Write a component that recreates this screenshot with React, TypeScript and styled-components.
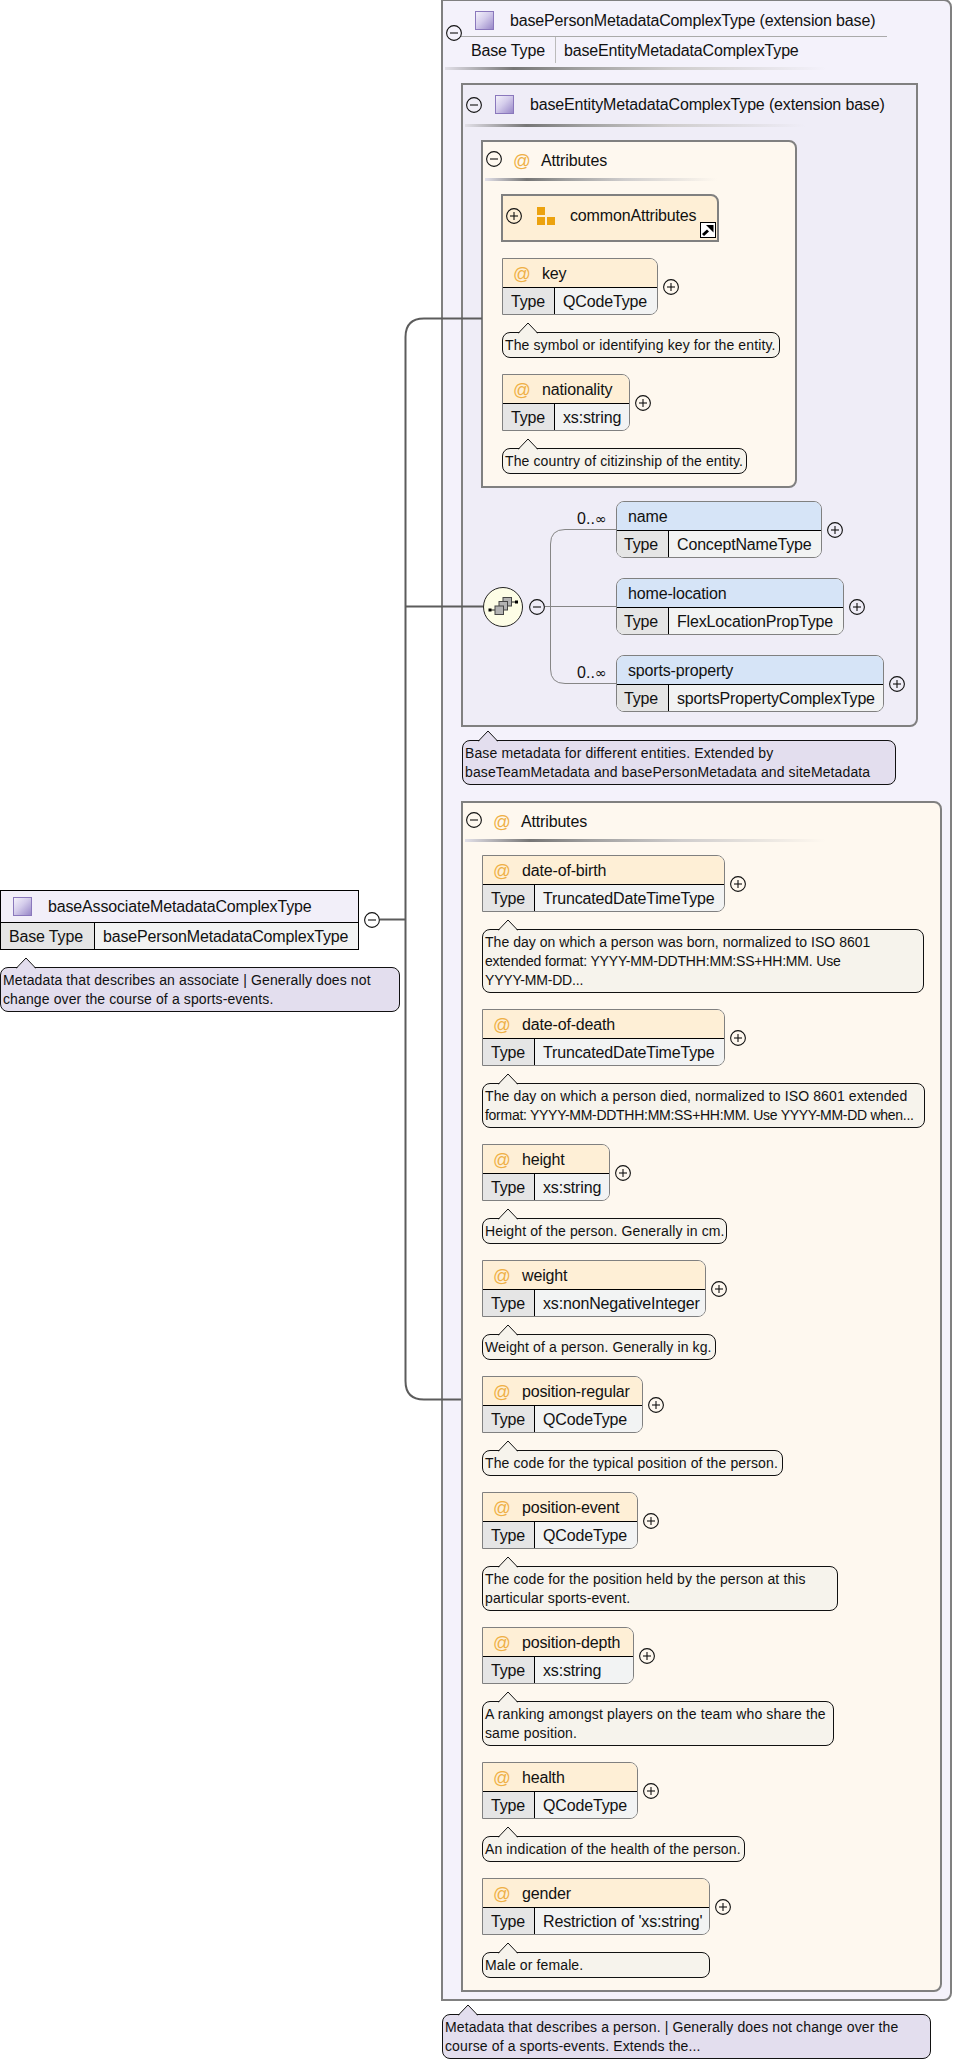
import React from "react";
import styled, { createGlobalStyle } from "styled-components";

const Global = createGlobalStyle`
  html, body { margin: 0; padding: 0; background: #fff; }
  body { font-family: "Liberation Sans", Arial, sans-serif; color: #111; }
`;

const Page = styled.div`
  position: relative;
  display: flex;
  width: 954px;
  height: 2061px;
  overflow: hidden;
  font-size: 16px;
  letter-spacing: -0.16px;
`;

const LeftColumn = styled.div`
  flex: none;
  width: 441px;
  padding-top: 890px;
  box-sizing: border-box;
`;

const RightColumn = styled.div`
  flex: none;
  display: flex;
  flex-direction: column;
  align-items: flex-start;
  margin-top: -1px;
`;

const RootRow = styled.div`
  display: flex;
  align-items: center;
  gap: 5px;
`;

const RootNode = styled.div`
  width: 359px;
  box-sizing: border-box;
  border: 1px solid #000;
  background: #f2eff9;
`;

const RootHeader = styled.div`
  display: flex;
  align-items: center;
  height: 31px;
  padding-left: 12px;
  gap: 16px;
  border-bottom: 1px solid #000;
`;

const TypeIcon = styled.div`
  flex: none;
  width: 19px;
  height: 19px;
  box-sizing: border-box;
  border: 1px solid #8a78bc;
  background: linear-gradient(135deg, #f4f2fb 0%, #d4cceb 45%, #9888c8 100%);
`;

const CellRow = styled.div`
  display: flex;
  height: 26px;
  background: #f2f3f3;
`;

const LabelCell = styled.div<{ $width: number; $pad?: number }>`
  flex: none;
  display: flex;
  align-items: center;
  width: ${(p) => p.$width}px;
  padding: 1px 0 0 ${(p) => p.$pad ?? 8}px;
  box-sizing: border-box;
  background: #e5e5e5;
  border-right: 1px solid #000;
`;

const ValueCell = styled.div`
  display: flex;
  align-items: center;
  padding: 1px 0 0 8px;
  box-sizing: border-box;
  white-space: nowrap;
`;

const Callout = styled.div<{ $width: number; $tone: "note" | "type" }>`
  position: relative;
  width: ${(p) => p.$width}px;
  box-sizing: border-box;
  border: 1px solid #111;
  border-radius: 8px;
  padding: 3px 0 2px 2px;
  font-size: 14px;
  line-height: 19px;
  white-space: nowrap;
  background: ${(p) => (p.$tone === "note" ? "#f6f3ec" : "#e3deee")};
`;

const NoteLine = styled.div<{ $tracking: number }>`
  letter-spacing: ${(p) => p.$tracking}px;
`;

const TipSvg = styled.svg`
  position: absolute;
  left: 15px;
  top: -11px;
`;

const OuterPanel = styled.div`
  position: relative;
  width: 511px;
  box-sizing: border-box;
  border: 2px solid #808080;
  border-radius: 0 8px 8px 0;
  background: #f4f2fb;
  padding-bottom: 7px;
`;

const Stack = styled.div`
  display: flex;
  flex-direction: column;
  align-items: flex-start;
`;

const OuterTitle = styled.div`
  display: flex;
  align-items: center;
  gap: 16px;
  width: 426px;
  height: 36px;
  margin-left: 18px;
  padding: 4px 0 0 14px;
  box-sizing: border-box;
  border-bottom: 1px solid #aaa;
  white-space: nowrap;
`;

const OuterToggle = styled.div`
  position: absolute;
  left: 3px;
  top: 24px;
  display: flex;
`;

const BaseRow = styled.div`
  display: flex;
  height: 26px;
  margin-left: 28px;
`;

const BaseLabel = styled.div`
  display: flex;
  align-items: center;
  width: 85px;
  padding-top: 1px;
  box-sizing: border-box;
  border-right: 1px solid #bbb;
`;

const Rule = styled.div<{ $width: number; $left: number }>`
  flex: none;
  width: ${(p) => p.$width}px;
  height: 3px;
  margin-left: ${(p) => p.$left}px;
  background: linear-gradient(90deg, #e2e0e8 0%, #767676 18%, #a0a0a0 35%, #cfcdcd 60%, rgba(220, 220, 220, 0) 100%);
`;

const BaseRule = styled(Rule)`
  margin-top: 4px;
`;

const EntityPanel = styled.div`
  width: 457px;
  margin: 13px 0 0 18px;
  box-sizing: border-box;
  border: 2px solid #808080;
  border-radius: 0 0 8px 0;
  background: #efedf7;
  padding-bottom: 13px;
`;

const EntityTitle = styled.div`
  display: flex;
  align-items: center;
  height: 39px;
  padding-left: 3px;
  white-space: nowrap;
`;

const EntityIcon = styled(TypeIcon)`
  margin: 0 16px 0 13px;
`;

const NoteAfterPanel = styled.div`
  margin: 13px 0 0 19px;
`;

const PersonNote = styled.div`
  margin: 13px 0 0 1px;
`;

const RootNoteGap = styled.div`
  margin-top: 17px;
`;

const AttrBox = styled.div<{ $width: number; $top: number; $left: number }>`
  width: ${(p) => p.$width}px;
  margin: ${(p) => p.$top}px 0 0 ${(p) => p.$left}px;
  box-sizing: border-box;
  border: 2px solid #808080;
  border-radius: 0 8px 8px 0;
  background: #fef8ef;
  padding-bottom: 12px;
`;

const AttrTitle = styled.div`
  display: flex;
  align-items: center;
  height: 36px;
  padding: 1px 0 0 3px;
  box-sizing: border-box;
  svg {
    margin-bottom: 3px;
  }
`;

const At = styled.span`
  display: inline-block;
  width: 16px;
  margin: 1px 1px 0 -1px;
  color: #efb045;
  letter-spacing: 0;
  font-size: 17.5px;
`;

const TitleAt = styled(At)`
  margin: 2px 12px 0 11px;
`;

const AttrList = styled.div`
  display: flex;
  flex-direction: column;
  align-items: flex-start;
  gap: 16px;
  margin-top: 13px;
  padding-left: 19px;
`;

const CommonGroup = styled.div`
  position: relative;
  display: flex;
  align-items: center;
  width: 218px;
  height: 48px;
  margin-left: -1px;
  padding: 0 0 5px 3px;
  box-sizing: border-box;
  border: 2px solid #808080;
  border-radius: 0 8px 0 0;
  background: #feefd6;
`;

const GroupIcon = styled.svg`
  margin: 0 14px 0 15px;
  flex: none;
`;

const LinkBadge = styled.svg`
  position: absolute;
  right: 1px;
  bottom: 2px;
`;

const AttrItem = styled.div`
  display: flex;
  flex-direction: column;
  align-items: flex-start;
  gap: 17px;
`;

const NodeRow = styled.div`
  position: relative;
  display: flex;
  align-items: center;
  gap: 5px;
`;

const NodeBox = styled.div<{ $width: number; $elem?: boolean }>`
  width: ${(p) => p.$width}px;
  height: 57px;
  box-sizing: border-box;
  border: 1px solid #808080;
  border-radius: ${(p) => (p.$elem ? "8px" : "0 8px 8px 0")};
  overflow: hidden;
  background: #f2f3f3;
`;

const NodeHeader = styled.div<{ $elem?: boolean }>`
  display: flex;
  align-items: center;
  height: 29px;
  padding: 1px 0 0 11px;
  box-sizing: border-box;
  gap: 12px;
  border-bottom: 1px solid #000;
  background: ${(p) => (p.$elem ? "#d6e4f7" : "#feefd6")};
`;

const SequenceArea = styled.div`
  display: flex;
  align-items: center;
  margin-top: 13px;
  padding-left: 20px;
`;

const SequenceBubble = styled.svg`
  flex: none;
  margin-right: 6px;
`;

const ConnectorSvg = styled.svg`
  flex: none;
`;

const ElemColumn = styled.div`
  display: flex;
  flex-direction: column;
  align-items: flex-start;
  gap: 20px;
`;

const Occurs = styled.span<{ $top: number }>`
  position: absolute;
  right: calc(100% + 9px);
  top: ${(p) => p.$top}px;
  line-height: 18px;
  white-space: nowrap;
  letter-spacing: 0;
`;

const Infinity_ = styled.span`
  font-family: "DejaVu Sans", sans-serif;
  font-size: 14.5px;
`;

const Overlay = styled.svg`
  position: absolute;
  left: 0;
  top: 0;
  pointer-events: none;
`;

const ToggleSvg = styled.svg`
  flex: none;
  display: block;
`;

function Toggle({ plus }: { plus?: boolean }) {
  return (
    <ToggleSvg width="16" height="16" viewBox="0 0 16 16">
      <circle cx="8" cy="8" r="7.4" fill="none" stroke="#111" strokeWidth="1.1" />
      <path d="M4 8h8" stroke="#111" strokeWidth="1.1" />
      {plus && <path d="M8 4v8" stroke="#111" strokeWidth="1.1" />}
    </ToggleSvg>
  );
}

function Tip({ fill }: { fill: string }) {
  return (
    <TipSvg width="20" height="12" viewBox="0 0 20 12">
      <polygon points="0,12 10,1 20,12" fill={fill} />
      <polyline points="0,11.5 10,1 20,11.5" fill="none" stroke="#111" strokeWidth="1" />
    </TipSvg>
  );
}

function Note({
  width,
  tone,
  lines,
  tracking,
}: {
  width: number;
  tone: "note" | "type";
  lines: string[];
  tracking?: number[];
}) {
  return (
    <Callout $width={width} $tone={tone}>
      <Tip fill={tone === "note" ? "#f6f3ec" : "#e3deee"} />
      {lines.map((l, i) => (
        <NoteLine key={i} $tracking={tracking ? tracking[i] : 0.12}>
          {l}
        </NoteLine>
      ))}
    </Callout>
  );
}

type AttrData = {
  name: string;
  type: string;
  width: number;
  docWidth: number;
  doc: string[];
  tracking?: number[];
};

function Attr({ a }: { a: AttrData }) {
  return (
    <AttrItem>
      <NodeRow>
        <NodeBox $width={a.width}>
          <NodeHeader>
            <At>@</At>
            <span>{a.name}</span>
          </NodeHeader>
          <CellRow>
            <LabelCell $width={52}>Type</LabelCell>
            <ValueCell>{a.type}</ValueCell>
          </CellRow>
        </NodeBox>
        <Toggle plus />
      </NodeRow>
      <Note width={a.docWidth} tone="note" lines={a.doc} tracking={a.tracking} />
    </AttrItem>
  );
}

function Elem({ name, type, width, occursTop }: { name: string; type: string; width: number; occursTop?: number }) {
  return (
    <NodeRow>
      {occursTop !== undefined && (
        <Occurs $top={occursTop}>
          0..<Infinity_>∞</Infinity_>
        </Occurs>
      )}
      <NodeBox $width={width} $elem>
        <NodeHeader $elem>
          <span>{name}</span>
        </NodeHeader>
        <CellRow>
          <LabelCell $width={52} $pad={7}>
            Type
          </LabelCell>
          <ValueCell>{type}</ValueCell>
        </CellRow>
      </NodeBox>
      <Toggle plus />
    </NodeRow>
  );
}

const entityAttrs: AttrData[] = [
  { name: "key", type: "QCodeType", width: 156, docWidth: 278, doc: ["The symbol or identifying key for the entity."] },
  { name: "nationality", type: "xs:string", width: 128, docWidth: 245, doc: ["The country of citizinship of the entity."] },
];

const personAttrs: AttrData[] = [
  {
    name: "date-of-birth",
    type: "TruncatedDateTimeType",
    width: 243,
    docWidth: 442,
    doc: [
      "The day on which a person was born, normalized to ISO 8601",
      "extended format: YYYY-MM-DDTHH:MM:SS+HH:MM. Use",
      "YYYY-MM-DD...",
    ],
    tracking: [0.03, -0.19, -0.19],
  },
  {
    name: "date-of-death",
    type: "TruncatedDateTimeType",
    width: 243,
    docWidth: 443,
    doc: [
      "The day on which a person died, normalized to ISO 8601 extended",
      "format: YYYY-MM-DDTHH:MM:SS+HH:MM. Use YYYY-MM-DD when...",
    ],
    tracking: [0.12, -0.28],
  },
  { name: "height", type: "xs:string", width: 128, docWidth: 245, doc: ["Height of the person. Generally in cm."] },
  { name: "weight", type: "xs:nonNegativeInteger", width: 224, docWidth: 234, doc: ["Weight of a person. Generally in kg."] },
  { name: "position-regular", type: "QCodeType", width: 161, docWidth: 301, doc: ["The code for the typical position of the person."] },
  {
    name: "position-event",
    type: "QCodeType",
    width: 156,
    docWidth: 356,
    doc: ["The code for the position held by the person at this", "particular sports-event."],
  },
  {
    name: "position-depth",
    type: "xs:string",
    width: 152,
    docWidth: 352,
    doc: ["A ranking amongst players on the team who share the", "same position."],
  },
  { name: "health", type: "QCodeType", width: 156, docWidth: 263, doc: ["An indication of the health of the person."] },
  { name: "gender", type: "Restriction of 'xs:string'", width: 228, docWidth: 228, doc: ["Male or female."] },
];

export default function App() {
  return (
    <Page>
      <Global />
      <LeftColumn>
        <Stack>
          <RootRow>
            <RootNode>
              <RootHeader>
                <TypeIcon />
                <span>baseAssociateMetadataComplexType</span>
              </RootHeader>
              <CellRow>
                <LabelCell $width={94}>Base Type</LabelCell>
                <ValueCell>basePersonMetadataComplexType</ValueCell>
              </CellRow>
            </RootNode>
            <Toggle />
          </RootRow>
          <RootNoteGap>
            <Note
              width={400}
              tone="type"
              lines={["Metadata that describes an associate | Generally does not", "change over the course of a sports-events."]}
            />
          </RootNoteGap>
        </Stack>
      </LeftColumn>

      <RightColumn>
        <OuterPanel>
          <OuterToggle>
            <Toggle />
          </OuterToggle>
          <Stack>
            <OuterTitle>
              <TypeIcon />
              <span>basePersonMetadataComplexType (extension base)</span>
            </OuterTitle>
            <BaseRow>
              <BaseLabel>Base Type</BaseLabel>
              <ValueCell>baseEntityMetadataComplexType</ValueCell>
            </BaseRow>
            <BaseRule $width={381} $left={2} />

            <EntityPanel>
              <EntityTitle>
                <Toggle />
                <EntityIcon />
                <span>baseEntityMetadataComplexType (extension base)</span>
              </EntityTitle>
              <Rule $width={340} $left={2} />
              <AttrBox $width={316} $top={13} $left={18}>
                <AttrTitle>
                  <Toggle />
                  <TitleAt>@</TitleAt>
                  <span>Attributes</span>
                </AttrTitle>
                <Rule $width={232} $left={2} />
                <AttrList>
                  <CommonGroup>
                    <Toggle plus />
                    <GroupIcon width="19" height="18" viewBox="0 0 19 18">
                      <path d="M0 0h8v8H0zM0 10h8v8H0zM10 10h8v8h-8z" fill="#eca20f" />
                    </GroupIcon>
                    <span>commonAttributes</span>
                    <LinkBadge width="16" height="16" viewBox="0 0 16 16">
                      <rect x="0.5" y="0.5" width="15" height="15" fill="#fff" stroke="#000" />
                      <path d="M3 13L8 8.5" stroke="#000" strokeWidth="3" />
                      <path d="M6 3h7.5v7.5z" fill="#000" />
                    </LinkBadge>
                  </CommonGroup>
                  {entityAttrs.map((a) => (
                    <Attr key={a.name} a={a} />
                  ))}
                </AttrList>
              </AttrBox>
              <SequenceArea>
                <SequenceBubble width="40" height="40" viewBox="0 0 40 40">
                  <circle cx="20" cy="20" r="19.5" fill="#fdfde6" stroke="#222" strokeWidth="1" />
                  <path d="M7 23h5M28 15h5" stroke="#222" strokeWidth="1" />
                  <rect x="5.5" y="21.5" width="3" height="3" fill="#000" />
                  <rect x="32" y="13.5" width="3" height="3" fill="#000" />
                  <rect x="20" y="10.5" width="8.5" height="8.5" fill="#b2b2b2" stroke="#444" />
                  <rect x="16" y="14.5" width="8.5" height="8.5" fill="#b2b2b2" stroke="#444" />
                  <rect x="12" y="19" width="8.5" height="8.5" fill="#b2b2b2" stroke="#444" />
                </SequenceBubble>
                <Toggle />
                <ConnectorSvg width="71" height="211" viewBox="0 0 71 211">
                  <path
                    d="M71 28.5H20Q5.5 28.5 5.5 43V168Q5.5 182.5 20 182.5H71M0 105.5H71"
                    fill="none"
                    stroke="#868686"
                    strokeWidth="1"
                  />
                </ConnectorSvg>
                <ElemColumn>
                  <Elem name="name" type="ConceptNameType" width={206} occursTop={9} />
                  <Elem name="home-location" type="FlexLocationPropType" width={228} />
                  <Elem name="sports-property" type="sportsPropertyComplexType" width={268} occursTop={9} />
                </ElemColumn>
              </SequenceArea>
            </EntityPanel>

            <NoteAfterPanel>
              <Note
                width={434}
                tone="type"
                lines={["Base metadata for different entities. Extended by", "baseTeamMetadata and basePersonMetadata and siteMetadata"]}
              />
            </NoteAfterPanel>

            <AttrBox $width={481} $top={16} $left={18}>
              <AttrTitle>
                <Toggle />
                <TitleAt>@</TitleAt>
                <span>Attributes</span>
              </AttrTitle>
              <Rule $width={360} $left={2} />
              <AttrList>
                {personAttrs.map((a) => (
                  <Attr key={a.name} a={a} />
                ))}
              </AttrList>
            </AttrBox>
          </Stack>
        </OuterPanel>
        <PersonNote>
          <Note
            width={489}
            tone="type"
            lines={["Metadata that describes a person. | Generally does not change over the", "course of a sports-events. Extends the..."]}
          />
        </PersonNote>
      </RightColumn>

      <Overlay width="954" height="2061" viewBox="0 0 954 2061">
        <path
          d="M482 318.5H424Q405.5 318.5 405.5 337V1381Q405.5 1399.5 424 1399.5H461M405.5 606.5H483M380 919.5H405.5"
          fill="none"
          stroke="#5c5c5c"
          strokeWidth="2"
        />
      </Overlay>
    </Page>
  );
}
